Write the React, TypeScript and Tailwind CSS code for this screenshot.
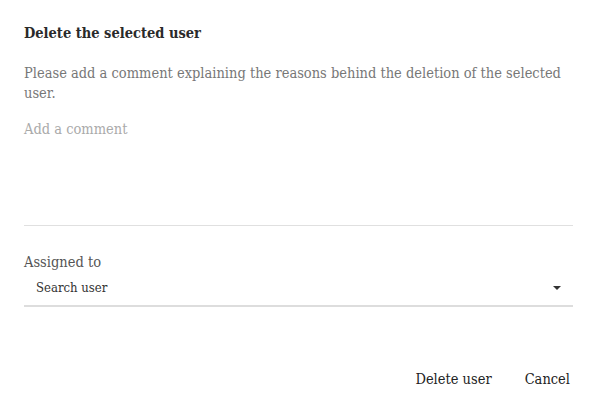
import React from 'react';

const slab = { fontFamily: '"DejaVu Serif Condensed", "DejaVu Serif", serif' };

export default function App() {
  return (
    <div className="w-[597px] h-[410px] bg-white" style={slab}>
      <div className="px-6 pt-[22px]">
        <h2 className="text-[14.5px] leading-[22px] font-bold text-[#2a2a2a]">Delete the selected user</h2>
        <p className="mt-[19px] text-[14.5px] leading-[20px] text-[#777]">
          Please add a comment explaining the reasons behind the deletion of the selected user.
        </p>
        <div className="mt-[16px] h-[107px] border-b border-[#e0e0e0] text-[14.5px] leading-[20px] text-[#aaa]">
          Add a comment
        </div>
        <div className="mt-[26px] text-[14.5px] leading-[20px] text-[#555]">Assigned to</div>
        <div className="flex items-center justify-between h-[35px] pb-[1px] border-b-2 border-[#ddd] pl-3 pr-3">
          <span className="text-[13px] text-[#333]">Search user</span>
          <span className="w-0 h-0 border-l-[4px] border-r-[4px] border-t-[4px] border-l-transparent border-r-transparent border-t-[#333]" />
        </div>
        <div className="mt-[62px] flex justify-end gap-[33px] pr-[3px]">
          <button className="text-[14.5px] text-[#222]">Delete user</button>
          <button className="text-[14.5px] text-[#222]">Cancel</button>
        </div>
      </div>
    </div>
  );
}
